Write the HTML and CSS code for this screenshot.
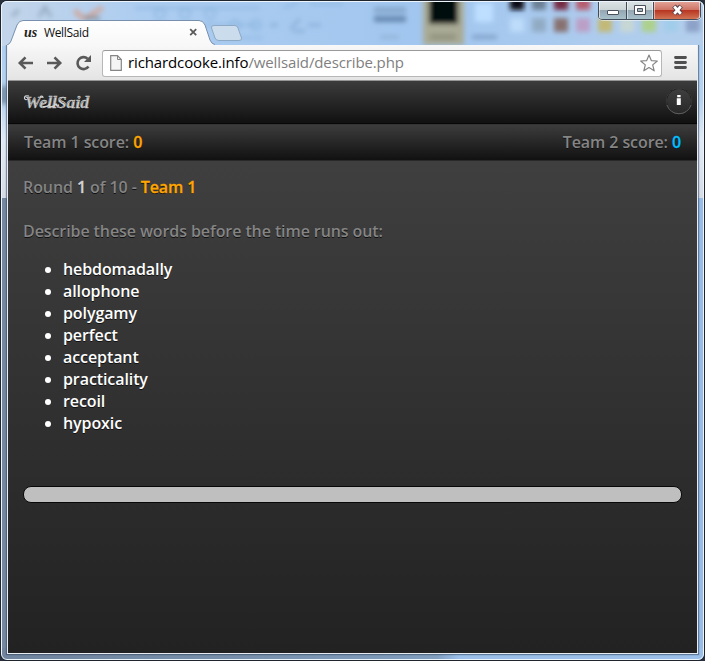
FILE: index.html
```html
<!DOCTYPE html>
<html lang="en">
<head>
<meta charset="utf-8">
<title>WellSaid</title>
<link rel="stylesheet" href="styles.css">
</head>
<body>
<div class="window">
  <svg class="glass" width="705" height="661" viewBox="0 0 705 661" aria-hidden="true">
    <defs>
      <filter id="b"><feGaussianBlur stdDeviation="2.6"/></filter>
      <linearGradient id="side" x1="0" y1="0" x2="0" y2="1">
        <stop offset="0" stop-color="#a9cdf3"/><stop offset=".5" stop-color="#b6d2ef"/><stop offset=".7" stop-color="#e0eaf6"/><stop offset="1" stop-color="#d6dce5"/>
      </linearGradient>
      <linearGradient id="bot"><stop offset="0" stop-color="#70859d"/><stop offset=".35" stop-color="#7890ab"/><stop offset=".62" stop-color="#819ebf"/><stop offset=".65" stop-color="#9abfe9"/><stop offset="1" stop-color="#9abfe9"/></linearGradient>
      <linearGradient id="top"><stop offset="0" stop-color="#c3d5e9"/><stop offset=".2" stop-color="#adcdf0"/><stop offset=".6" stop-color="#a1c6ef"/><stop offset="1" stop-color="#b4cfed"/></linearGradient>
    </defs>
    <rect width="705" height="198" fill="url(#side)"/>
    <rect y="198" width="12" height="463" fill="#74899f"/>
    <rect x="694" y="198" width="11" height="463" fill="#98bce6"/>
    <rect y="648" width="705" height="13" fill="url(#bot)"/>
    <rect width="705" height="46" fill="url(#top)"/>
    <g filter="url(#b)">
      <path d="M12 16l7-6M39 17l6-10 6 10" stroke="#93a8be" stroke-width="3" fill="none"/>
      <path d="M75 10q8 12 15 6t13-8" stroke="#cfa9a0" stroke-width="5" fill="none"/>
      <path d="M84 18h16" stroke="#7c8790" stroke-width="3"/>
      <g fill="none" stroke="#8cb6df" stroke-width="2">
        <path d="M135 8h125M140 25h118M215 38h48M283 8l15-5M310 4h33"/>
        <circle cx="160" cy="14" r="5"/><circle cx="185" cy="14" r="5"/><circle cx="210" cy="14" r="5"/><circle cx="235" cy="25" r="5"/><circle cx="256" cy="25" r="5"/>
      </g>
      <path d="M270 25h8M290 29l10-10M293 31h12M308 25h13" stroke="#8ab0d8" stroke-width="3"/>
      <path d="M374 10h32" stroke="#86a8ce" stroke-width="6"/>
      <path d="M374 19h32" stroke="#6588b1" stroke-width="6"/>
      <path d="M380 37h19" stroke="#93b5da" stroke-width="4"/>
      <rect x="423" y="-5" width="41" height="50" fill="#a9aa94"/>
      <path d="M430 37h26" stroke="#8f907f" stroke-width="5"/>
      <rect x="429" y="-6" width="29" height="30" fill="#03070d"/>
      <rect x="475" y="3" width="18" height="19" fill="#bedfff"/>
      <path d="M472 37h25" stroke="#80a0c8" stroke-width="4"/>
      <g>
        <rect x="510" y="-3" width="14" height="13" fill="#080e18"/><rect x="532" y="-3" width="14" height="13" fill="#6c8095"/><rect x="554" y="-3" width="14" height="13" fill="#742c43"/><rect x="576" y="-3" width="14" height="13" fill="#b65d70"/>
        <rect x="510" y="18" width="14" height="14" fill="#bddcfa"/><rect x="532" y="18" width="14" height="14" fill="#91abc4"/><rect x="554" y="18" width="14" height="14" fill="#877170"/><rect x="576" y="18" width="14" height="14" fill="#bc9fc6"/><rect x="598" y="18" width="14" height="14" fill="#c2b976"/><rect x="620" y="18" width="14" height="14" fill="#c7d7d4"/><rect x="642" y="18" width="14" height="14" fill="#add18c"/><rect x="664" y="18" width="14" height="14" fill="#a1cdea"/><rect x="686" y="18" width="14" height="14" fill="#8ca2c8"/>
      </g>
      <rect x="1" y="86" width="6" height="18" fill="#6c8299"/>
    </g>
  </svg>

  <div class="tabstrip">
    <div class="tab">
      <svg class="tab-shape" width="208" height="27" viewBox="0 0 208 27" aria-hidden="true">
        <defs><linearGradient id="tg" x1="0" y1="0" x2="0" y2="1"><stop offset="0" stop-color="#fff"/><stop offset="1" stop-color="#f7f7f7"/></linearGradient></defs>
        <path d="M0 27V25Q3 24 4 21L10 5Q12 .5 16 .5H192Q196 .5 198 5L203 20Q205 24.500 208 24.500V27Z" fill="url(#tg)"/>
        <path d="M0 25Q3 24 4 21L10 5Q12 .5 16 .5H192Q196 .5 198 5L203 20Q205 24.500 208 24.500" fill="none" stroke="#7890ad"/>
      </svg>
      <span class="favicon">us</span>
      <span class="tab-title">WellSaid</span>
      <svg class="tab-close" width="9" height="9" viewBox="0 0 9 9"><path d="M1.200 1.200l6 6M7.200 1.200l-6 6" stroke="#5b5b5b" stroke-width="1.800"/></svg>
    </div>
    <svg class="newtab" width="33" height="18" viewBox="0 0 33 18"><path d="M4 1.500H25Q27 1.500 28 4L31.500 14Q32 16.500 29 16.500H9Q6 16.500 5 14L1.500 4Q1 1.500 4 1.500Z" fill="#cbdcec" stroke="#8ea9c5"/></svg>
  </div>

  <svg class="controls" width="104" height="21" viewBox="0 0 104 21" role="img" aria-label="Window controls">
    <defs>
      <linearGradient id="cg" x1="0" y1="0" x2="0" y2="1"><stop offset="0" stop-color="#dce3e4"/><stop offset=".48" stop-color="#cbd5d5"/><stop offset=".5" stop-color="#93a6b2"/><stop offset="1" stop-color="#a7c0ca"/></linearGradient>
      <linearGradient id="rg" x1="0" y1="0" x2="0" y2="1"><stop offset="0" stop-color="#e4a79b"/><stop offset=".48" stop-color="#cf7566"/><stop offset=".5" stop-color="#b73320"/><stop offset="1" stop-color="#d17455"/></linearGradient>
    </defs>
    <path d="M.5 0V15Q.5 19.500 5 19.500H98Q103 19.500 103 15V0Z" fill="#fff"/>
    <path d="M1.500 0V14Q1.500 18 5 18H28V0Z" fill="url(#cg)"/><path d="M29.500 0h25v18h-25z" fill="url(#cg)"/><path d="M56.500 0V18H97Q101.500 18 101.500 14V0Z" fill="url(#rg)"/>
    <path d="M.5 0V15Q.5 18.500 5 18.500H98Q102.500 18.500 102.500 15V0M28.500 0V19M55.500 0V19" fill="none" stroke="#414b59"/>
    <rect x="9.500" y="9.500" width="11" height="4" rx=".5" fill="#fff" stroke="#4b505c"/>
    <path d="M36.500 4.500h11v9h-11z" fill="#fff" stroke="#4b505c"/><path d="M39.500 7.500h5v3h-5z" fill="#a4b7bd" stroke="#4b505c"/>
    <path d="M76 5l7 8M83 5l-7 8" stroke="#563f4a" stroke-width="4.800"/><path d="M76.200 5.500l6.600 7.200M82.800 5.500l-6.600 7.200" stroke="#fff" stroke-width="2.800"/>
  </svg>

  <div class="browser">
    <div class="toolbar">
      <svg class="nav" width="78" height="18" viewBox="0 0 78 18" fill="none" stroke="#595959" stroke-width="2.600">
        <path d="M2 9H16M8.500 3.300L2.800 9l5.700 5.700M30 9H44M37.500 3.300L43.200 9l-5.700 5.700"/>
        <path d="M71.500 12.500A6 6 0 1 1 70.600 4.700"/><path d="M74 1V8H67Z" fill="#595959" stroke="none"/>
      </svg>
      <div class="omnibox">
        <svg class="page" width="12" height="16" viewBox="0 0 12 16"><path d="M.7.7H7.500L11.300 4.500V15.300H.7Z" fill="#f5f5f5" stroke="#858585" stroke-width="1.200"/><path d="M7.500.7V4.500H11.300" fill="none" stroke="#858585"/></svg>
        <span class="url"><b>richardcooke.info</b>/wellsaid/describe.php</span>
        <svg class="star" width="20" height="19" viewBox="0 0 20 19"><path d="M10 1L12.300 6.600L18.300 7L13.700 10.900L15.200 16.800L10 13.600L4.800 16.800L6.300 10.900L1.700 7L7.700 6.600Z" fill="#fff" stroke="#858585" stroke-width="1.200" stroke-linejoin="round"/></svg>
      </div>
      <svg class="menu" width="13" height="13" viewBox="0 0 13 13"><path d="M1.500 1.500h10M1.500 6.500h10M1.500 11.500h10" stroke="#505050" stroke-width="2.800" stroke-linecap="round"/></svg>
    </div>

    <main class="app">
      <header class="bar brand-bar">
        <svg class="brand" width="72" height="22" viewBox="0 0 72 22">
          <text class="brand-text" x="3" y="17.500" textLength="64" lengthAdjust="spacingAndGlyphs">WellSaid</text>
          <path class="swash" d="M7 6Q2 5 2.500 8.500Q4 11 6 8.500M18 6.500Q21 5.500 21 8M37 15.500Q34 17 34.500 13.500M21 16.500Q25 17.500 28 14M28 16.500Q31 17.500 34 14"/>
        </svg>
        <svg class="info" width="28" height="28" viewBox="0 0 28 28">
          <defs><linearGradient id="ig" x1="0" y1="0" x2="0" y2="1"><stop offset="0" stop-color="#3f3f3f"/><stop offset="1" stop-color="#292929"/></linearGradient></defs>
          <circle cx="14" cy="14" r="12.800" fill="#000"/><circle cx="14" cy="14" r="12" fill="url(#ig)"/><path d="M2 18A12.600 12.600 0 0 0 26 18" fill="none" stroke="#666"/><circle cx="14" cy="14" r="12.700" fill="none" stroke="#585858" stroke-width=".6"/>
          <path d="M12.200 8h3.400v2.300h-3.400zM11.800 11.300h4v6.700h-4z" fill="#fff"/>
        </svg>
      </header>
      <div class="bar score-bar">
        <span>Team 1 score: <b class="orange">0</b></span>
        <span>Team 2 score: <b class="blue">0</b></span>
      </div>
      <section class="round">
        <p>Round <b class="pale">1</b> of 10 - <b class="orange">Team 1</b></p>
        <p>Describe these words before the time runs out:</p>
        <ul>
          <li>hebdomadally</li>
          <li>allophone</li>
          <li>polygamy</li>
          <li>perfect</li>
          <li>acceptant</li>
          <li>practicality</li>
          <li>recoil</li>
          <li>hypoxic</li>
        </ul>
        <div class="timer"></div>
      </section>
    </main>
  </div>
</div>
</body>
</html>
```
FILE: styles.css
```css
* { box-sizing: border-box; }
body { margin: 0; background: #27303c; overflow: hidden; }
.window {
  position: relative;
  width: 705px;
  height: 661px;
  padding: 19px 6px 6px;
  border: 1px solid #20242c;
  border-radius: 7px;
  overflow: hidden;
}
.window::after {
  content: "";
  position: absolute;
  inset: 0;
  border: 1px solid #edf5fc;
  border-radius: 6px;
  pointer-events: none;
}
.glass { position: absolute; left: -1px; top: -1px; }
.controls { position: absolute; right: 2px; top: 0; }
.tabstrip { position: relative; display: flex; height: 25px; }
.tab { position: relative; width: 203px; height: 25px; display: flex; align-items: center; padding-left: 17px; }
.tab-shape { position: absolute; left: 0; top: 0; }
.favicon { position: relative; width: 20px; font: italic bold 14px "Liberation Serif", serif; line-height: 20px; color: #222; }
.tab-title { position: relative; width: 145px; font: 12px "Open Sans", sans-serif; letter-spacing: -.35px; color: #111; }
.tab-close { position: relative; }
.newtab { position: relative; margin-top: 4px; }
.browser {
  position: relative;
  width: 691px;
  height: 609px;
  border: 1px solid #e8edf3;
  border-top: 0;
  box-shadow: 0 0 1px 1px rgba(49, 69, 92, .55);
  clip-path: inset(0 -2px -2px -2px);
}
.toolbar {
  height: 36px;
  display: flex;
  align-items: center;
  padding: 1px 9px 0 9px;
  background: linear-gradient(#f8f8f8, #e4e4e4);
  border-bottom: 1px solid #969696;
}
.nav { flex: none; margin-top: -1px; }
.omnibox {
  width: 560px;
  height: 27px;
  margin-left: 7px;
  display: flex;
  align-items: center;
  padding: 0 2px 0 7px;
  background: #fff;
  border: 1px solid #b7b7b7;
  border-top-color: #999;
  border-radius: 3px;
}
.page { margin-top: -1px; }
.url { margin: -2px 0 0 6px; flex: 1; font: 15px/22px "Open Sans", sans-serif; color: #808080; letter-spacing: -.12px; }
.url b { font-weight: 400; color: #000; }
.menu { margin: -2px 0 0 12px; }
.app {
  height: 572px;
  font: 600 16px/22px "Open Sans", sans-serif;
  letter-spacing: -.09px;
  color: #858585;
  background: linear-gradient(#444, #222);
  text-shadow: 0 1px 0 #111;
}
.app b { font-weight: 600; }
.bar { display: flex; justify-content: space-between; align-items: center; background: linear-gradient(#3c3c3c, #111); }
.brand-bar { height: 43px; padding: 0 4px 3px 14px; border-bottom: 1px solid #080808; }
.brand-text { font: italic bold 17px "Liberation Serif", serif; fill: #d4d4d4; stroke: #d4d4d4; stroke-width: .4px; }
.swash { fill: none; stroke: #d4d4d4; stroke-width: 1.2px; }
.score-bar { height: 37px; padding: 0 16px 2px; border-top: 1px solid #343434; border-bottom: 1px solid #292929; }
.app .orange { color: #ffa500; -webkit-text-stroke: .3px #ffa500; }
.app .blue { color: #00bfff; -webkit-text-stroke: .3px #00bfff; }
.app .pale { color: #d3d3d3; -webkit-text-stroke: .3px #d3d3d3; }
.round { padding: 15px 15px 0; }
.round p { margin: 0 0 22px; }
.round ul { margin: -6px 0 52px; padding-left: 40px; color: #fff; }
.timer { height: 17px; background: #bfbfbf; border: 1px solid #080808; border-radius: 8px; }
```
